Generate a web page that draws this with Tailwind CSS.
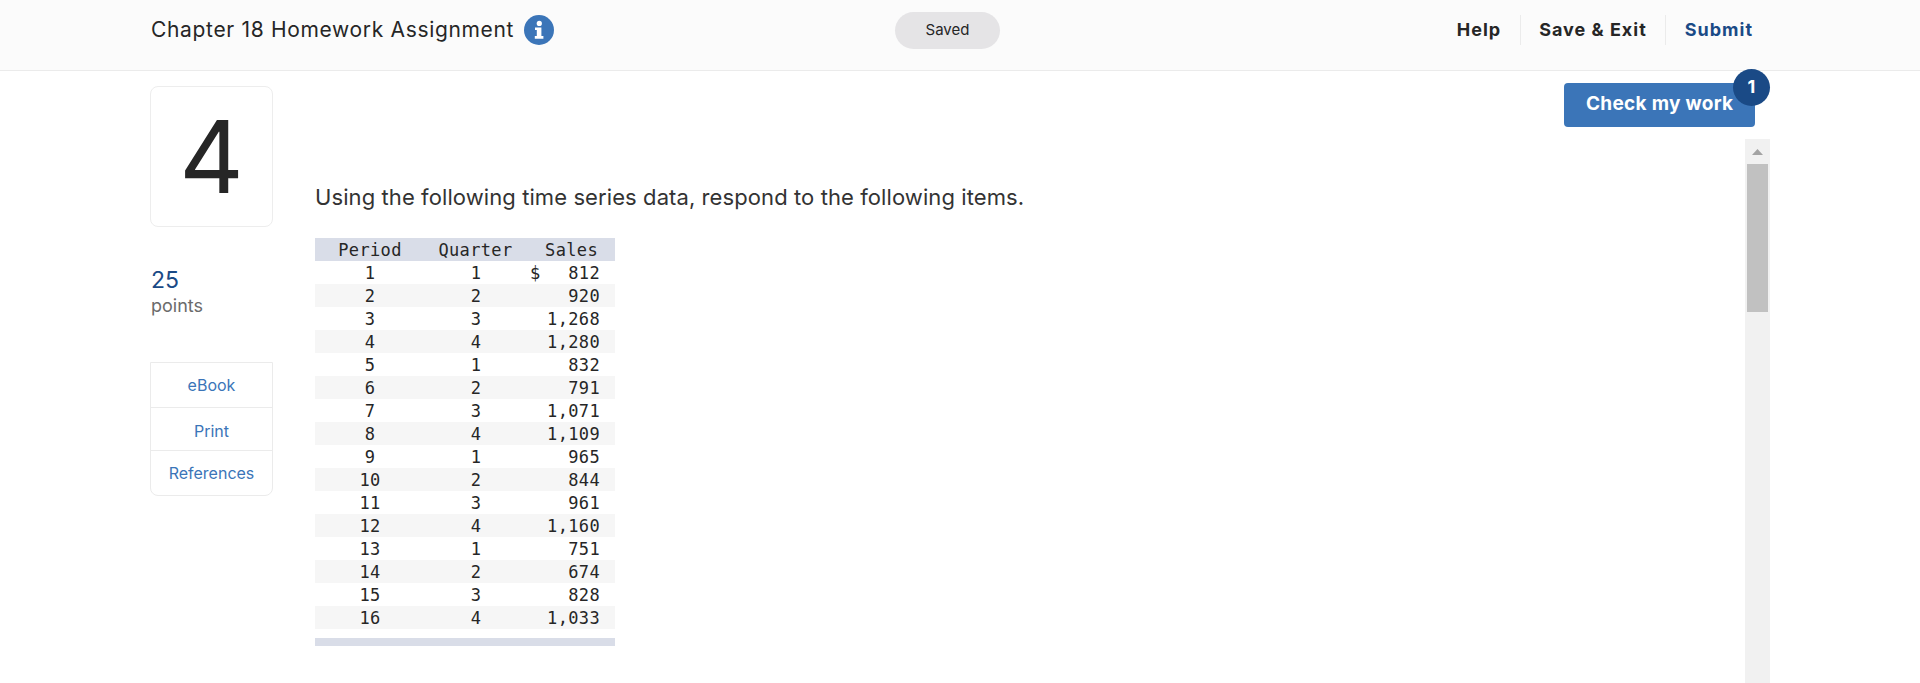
<!DOCTYPE html>
<html lang="en">
<head>
<meta charset="utf-8">
<title>Chapter 18 Homework Assignment</title>
<script src="https://cdn.jsdelivr.net/npm/@tailwindcss/browser@4"></script>
</head>
<body class="h-[683px] overflow-hidden bg-white font-['Inter','Open_Sans',sans-serif] text-[#262626]">
<header class="h-[71px] border-b border-[#ebebeb] bg-[#fbfbfb] pl-[151px] pr-[167px] flex items-start pt-[15px]">
  <div class="w-[744px] flex items-center gap-[10px]">
    <span class="text-[21px] tracking-[0.67px] leading-[30px]">Chapter 18 Homework Assignment</span>
    <svg class="w-[30px] h-[30px]" viewBox="0 0 30 30"><circle cx="15" cy="15" r="15" fill="#3b75b8"/><circle cx="15.3" cy="8.4" r="2.6" fill="#fff"/><path d="M11 12.5h6.4v8.6h2v2.6h-8.6v-2.6h2v-6h-1.8z" fill="#fff"/></svg>
  </div>
  <div class="w-[105px] h-[37px] -mt-[3px] rounded-full bg-[#e5e4e6] flex items-center justify-center text-[15px]">Saved</div>
  <nav class="ml-auto flex items-center text-[18px] tracking-[1px] font-bold leading-[30px]">
    <a class="pr-[19px] border-r border-[#ebebeb]">Help</a>
    <a class="px-[18px] border-r border-[#ebebeb]">Save &amp; Exit</a>
    <a class="pl-[19px] text-[#1a4a86]">Submit</a>
  </nav>
</header>
<main class="flex pl-[150px] pr-[150px] pt-[15px] h-[612px]">
  <aside class="w-[123px] shrink-0">
    <div class="h-[141px] border border-[#ededed] rounded-[8px] flex items-center justify-center">
      <span class="text-[100px] leading-none font-normal text-[#262626]">4</span>
    </div>
    <div class="mt-[39px] pl-[1px]">
      <div class="text-[23px] leading-[28px] text-[#1a4a86]">25</div>
      <div class="text-[18px] leading-[24px] text-[#6b6b6b]">points</div>
    </div>
    <div class="mt-[44px] border border-[#ebebeb] rounded-b-[8px] text-[16px] text-[#3b75b8] text-center">
      <div class="h-[45px] border-b border-[#ebebeb] flex items-center justify-center">eBook</div>
      <div class="h-[43px] border-b border-[#ebebeb] flex items-center justify-center pt-[4px]">Print</div>
      <div class="h-[44px] flex items-center justify-center">References</div>
    </div>
  </aside>
  <section class="ml-[42px] flex-1 flex flex-col">
    <div class="flex justify-end pr-[15px] h-[56px] shrink-0 -mt-[3px]">
      <div class="relative w-[191px] h-[44px] rounded-[4px] bg-[#3b75b8] text-white font-bold text-[19px] tracking-[0.3px] flex items-center pl-[22px] pb-[2px]">
        Check my work
        <span class="absolute -top-[14px] -right-[15px] w-[37px] h-[37px] rounded-full bg-[#1a4a86] flex items-center justify-center text-[18px] leading-none pb-[2px]">1</span>
      </div>
    </div>
    <div class="flex flex-1 min-h-0">
      <div class="flex-1">
        <p class="mt-[43px] text-[22px] leading-[30px] tracking-[0.09px] text-[#333]">Using the following time series data, respond to the following items.</p>
        <table class="mt-[26px] w-[300px] table-fixed border-collapse font-['DejaVu_Sans_Mono',monospace] text-[17px] leading-[20px] tracking-[0.35px] text-[#262626]">
          <colgroup><col class="w-[110px]"><col class="w-[102px]"><col class="w-[88px]"></colgroup>
          <thead class="bg-[#d9dde8]">
            <tr class="h-[23px]"><th class="font-normal text-center">Period</th><th class="font-normal text-center pr-[1px]">Quarter</th><th class="font-normal text-right pr-[17px]">Sales</th></tr>
          </thead>
          <tbody>
            <tr class="h-[23px]"><td class="text-center">1</td><td class="text-center">1</td><td class="pr-[15px]"><div class="flex justify-between pl-[3px]"><span>$</span><span>812</span></div></td></tr>
            <tr class="h-[23px] bg-[#f6f6f6]"><td class="text-center">2</td><td class="text-center">2</td><td class="text-right pr-[15px]">920</td></tr>
            <tr class="h-[23px]"><td class="text-center">3</td><td class="text-center">3</td><td class="text-right pr-[15px]">1,268</td></tr>
            <tr class="h-[23px] bg-[#f6f6f6]"><td class="text-center">4</td><td class="text-center">4</td><td class="text-right pr-[15px]">1,280</td></tr>
            <tr class="h-[23px]"><td class="text-center">5</td><td class="text-center">1</td><td class="text-right pr-[15px]">832</td></tr>
            <tr class="h-[23px] bg-[#f6f6f6]"><td class="text-center">6</td><td class="text-center">2</td><td class="text-right pr-[15px]">791</td></tr>
            <tr class="h-[23px]"><td class="text-center">7</td><td class="text-center">3</td><td class="text-right pr-[15px]">1,071</td></tr>
            <tr class="h-[23px] bg-[#f6f6f6]"><td class="text-center">8</td><td class="text-center">4</td><td class="text-right pr-[15px]">1,109</td></tr>
            <tr class="h-[23px]"><td class="text-center">9</td><td class="text-center">1</td><td class="text-right pr-[15px]">965</td></tr>
            <tr class="h-[23px] bg-[#f6f6f6]"><td class="text-center">10</td><td class="text-center">2</td><td class="text-right pr-[15px]">844</td></tr>
            <tr class="h-[23px]"><td class="text-center">11</td><td class="text-center">3</td><td class="text-right pr-[15px]">961</td></tr>
            <tr class="h-[23px] bg-[#f6f6f6]"><td class="text-center">12</td><td class="text-center">4</td><td class="text-right pr-[15px]">1,160</td></tr>
            <tr class="h-[23px]"><td class="text-center">13</td><td class="text-center">1</td><td class="text-right pr-[15px]">751</td></tr>
            <tr class="h-[23px] bg-[#f6f6f6]"><td class="text-center">14</td><td class="text-center">2</td><td class="text-right pr-[15px]">674</td></tr>
            <tr class="h-[23px]"><td class="text-center">15</td><td class="text-center">3</td><td class="text-right pr-[15px]">828</td></tr>
            <tr class="h-[23px] bg-[#f6f6f6]"><td class="text-center">16</td><td class="text-center">4</td><td class="text-right pr-[15px]">1,033</td></tr>
          </tbody>
        </table>
        <div class="mt-[9px] w-[300px] h-[8px] bg-[#d9dde8]"></div>
      </div>
      <div class="w-[25px] shrink-0 bg-[#f1f1f1] flex flex-col items-center">
        <div class="h-[25px] w-full flex items-center justify-center">
          <svg class="w-[11px] h-[6px]" viewBox="0 0 11 6"><path d="M5.5 0L11 6H0z" fill="#a3a3a3"/></svg>
        </div>
        <div class="w-[21px] h-[148px] bg-[#c1c1c1]"></div>
      </div>
    </div>
  </section>
</main>
</body>
</html>
